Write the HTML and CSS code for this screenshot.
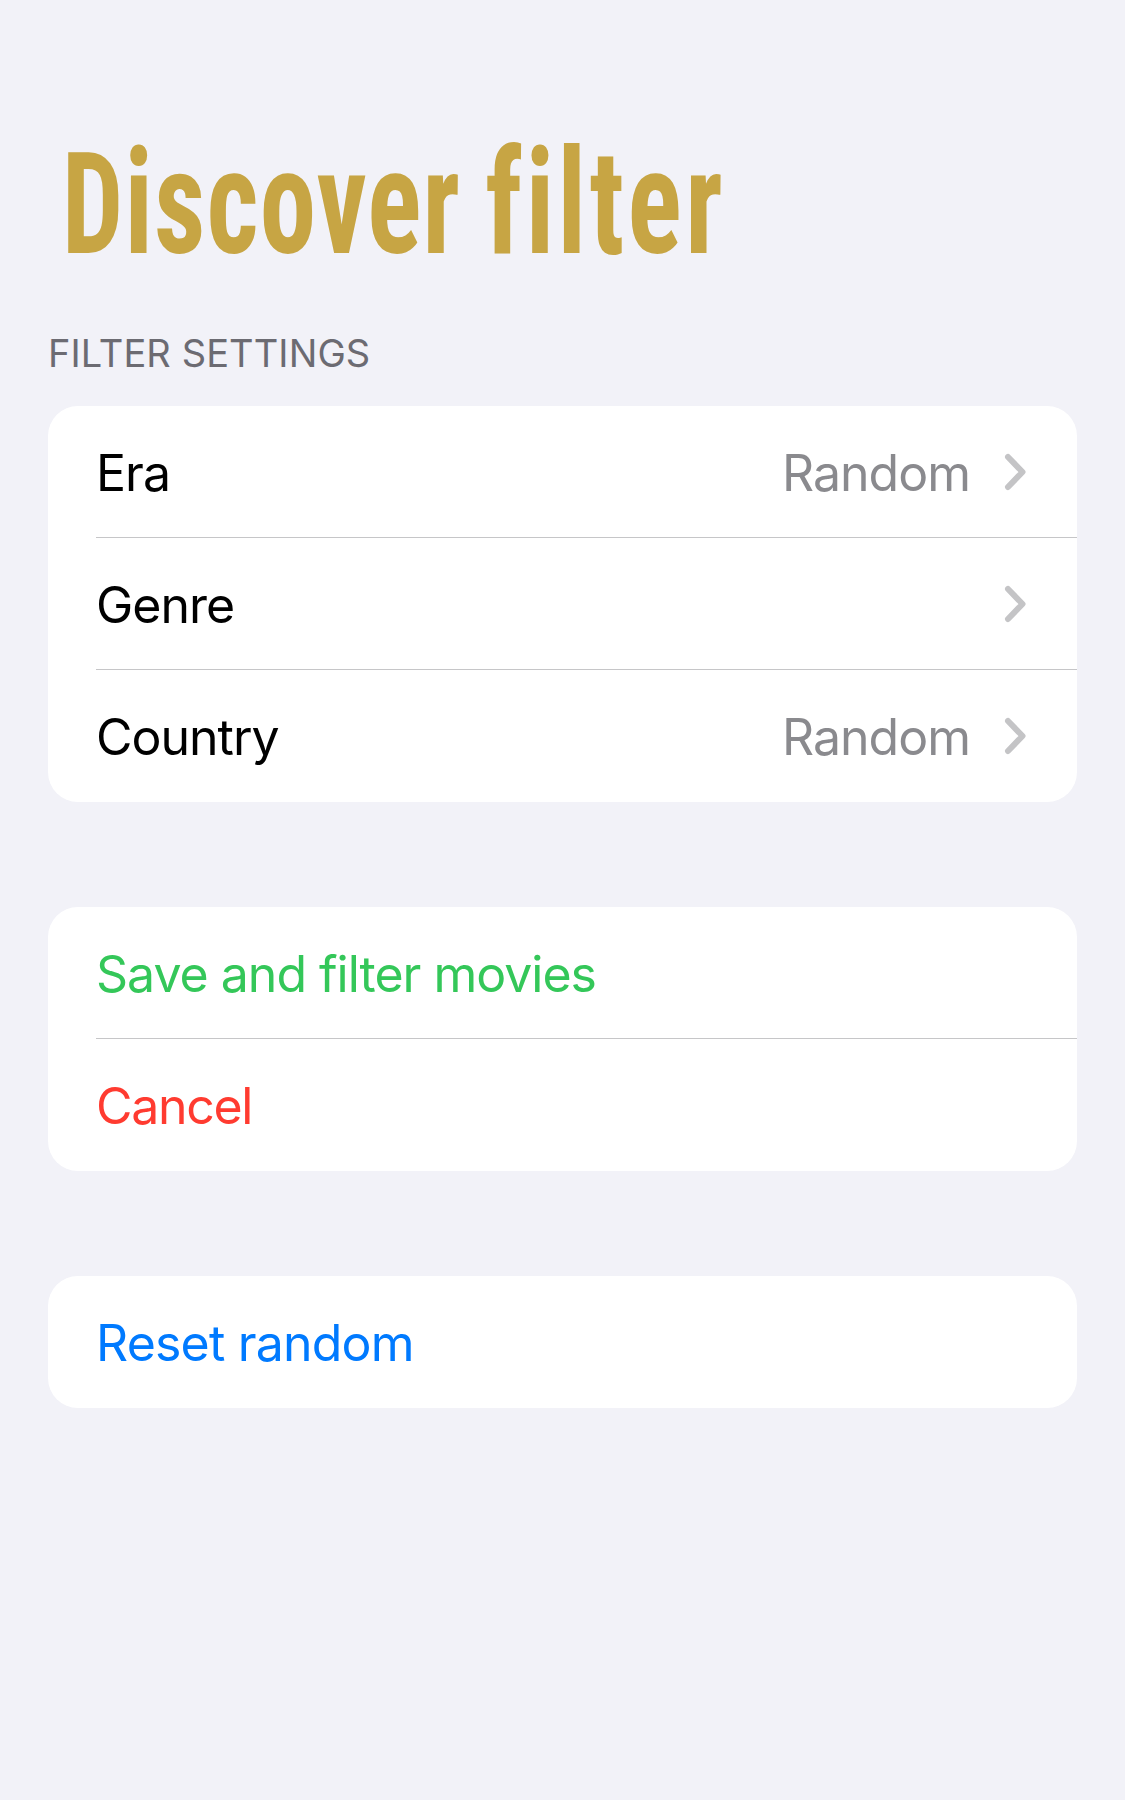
FILE: index.html
```html
<!DOCTYPE html>
<html lang="en">
<head>
<meta charset="utf-8">
<title>Discover filter</title>
<link rel="stylesheet" href="styles.css">
</head>
<body>
<main class="page">
  <h1 class="title"><span class="title-text">Discover <span class="title-end">filter</span></span></h1>
  <h2 class="section-label">FILTER SETTINGS</h2>
  <section class="card">
    <div class="row"><span class="era">Era</span><span class="value">Random</span><svg class="chevron" viewBox="0 0 24 38"><path d="M4 4 18.5 19 4 34"/></svg></div>
    <div class="row"><span class="genre">Genre</span><svg class="chevron" viewBox="0 0 24 38"><path d="M4 4 18.5 19 4 34"/></svg></div>
    <div class="row"><span class="country">Country</span><span class="value">Random</span><svg class="chevron" viewBox="0 0 24 38"><path d="M4 4 18.5 19 4 34"/></svg></div>
  </section>
  <section class="card">
    <div class="row save"><span>Save and filter movies</span></div>
    <div class="row cancel"><span>Cancel</span></div>
  </section>
  <section class="card">
    <div class="row reset"><span>Reset random</span></div>
  </section>
</main>
</body>
</html>
```
FILE: styles.css
```css
* { box-sizing: border-box; }
body {
  margin: 0;
  background: #f2f2f8;
  font-family: Inter, "Liberation Sans", sans-serif;
  color: #000;
}
.page { min-height: 1800px; padding: 123px 48px 0; }
.title {
  margin: 0;
  height: 160px;
  padding-left: 14px;
  font: 680 147px/160px "Roboto Condensed", Roboto, sans-serif;
  color: #c7a544;
  white-space: nowrap;
}
.title-text {
  display: inline-block;
  letter-spacing: 1.4px;
  word-spacing: -4px;
  transform: scaleX(.77);
  transform-origin: 0 50%;
}
.title-text::first-letter { font-size: 141px; }
.title-end { letter-spacing: 4.4px; }
.section-label {
  margin: 46px 0 29px;
  font-size: 38px;
  line-height: 48px;
  letter-spacing: .1px;
  font-weight: 400;
  color: #6c6b72;
}
.card {
  margin-bottom: 105px;
  border-radius: 30px;
  background: #fff;
  overflow: hidden;
}
.row {
  display: flex;
  align-items: center;
  height: 132px;
  margin-left: 48px;
  padding-right: 49px;
  border-bottom: 1px solid #c6c6c8;
  font-size: 50px;
  letter-spacing: -1px;
}
.row:last-child { border-bottom-color: transparent; }
.row > span { padding-top: 2px; }
.value { margin-left: auto; color: #8a8a8e; }
.chevron {
  width: 24px;
  height: 38px;
  margin-left: 34px;
  fill: none;
  stroke: #c4c4c6;
  stroke-width: 6;
  stroke-linecap: round;
  stroke-linejoin: round;
}
.genre + .chevron { margin-left: auto; }
.save { color: #34c759; }
.cancel { color: #ff3b30; }
.cancel > span { letter-spacing: -1.3px; }
.reset { color: #007aff; }
.reset > span { letter-spacing: -.8px; }
```
